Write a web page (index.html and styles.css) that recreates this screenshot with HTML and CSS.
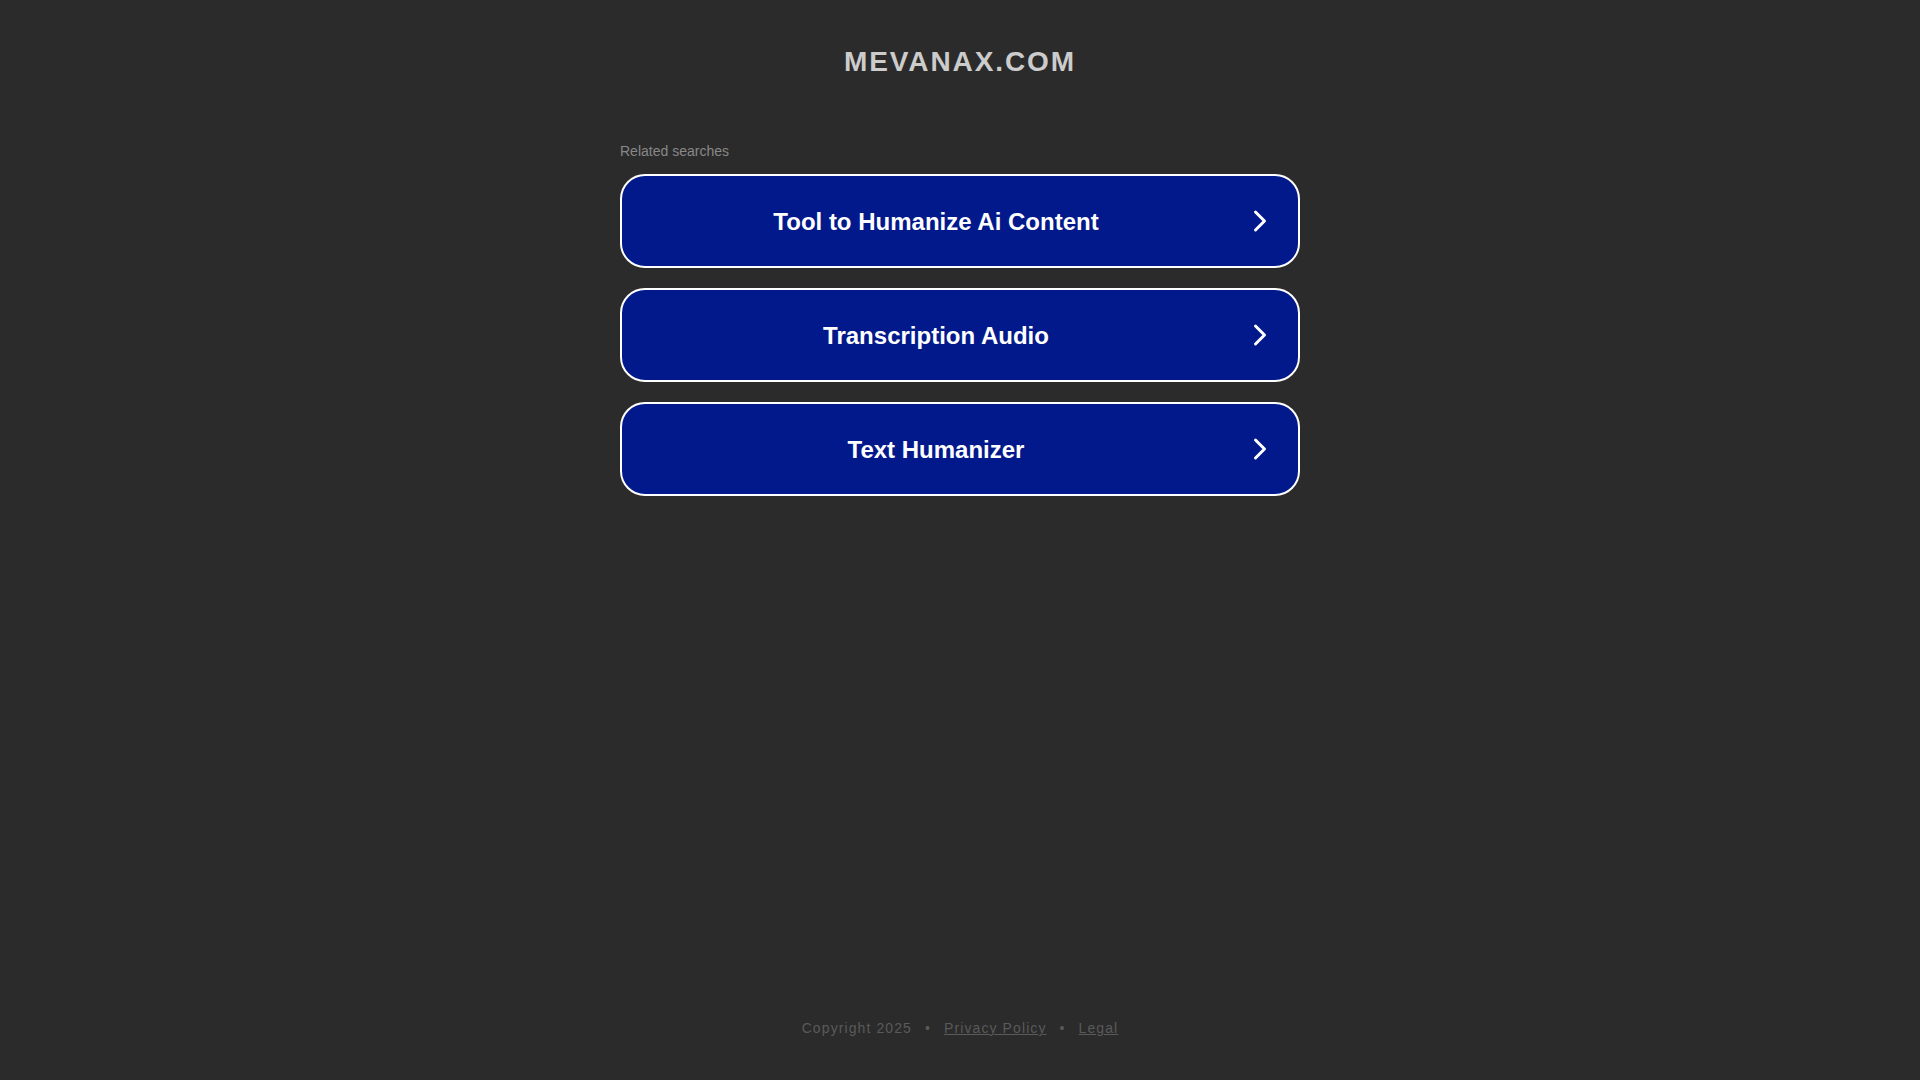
FILE: index.html
```html
<!DOCTYPE html>
<html lang="en">
<head>
<meta charset="utf-8">
<title>mevanax.com</title>
<link rel="stylesheet" href="styles.css">
</head>
<body>
<div class="page">
  <header class="header">
    <h1 class="domain">MEVANAX.COM</h1>
  </header>
  <main class="content">
    <div class="related-label">Related searches</div>
    <ul class="links">
      <li><a class="search-btn" href="#"><span class="search-text">Tool to Humanize Ai Content</span><svg class="chev" width="16" height="24" viewBox="0 0 16 24"><polyline points="3.5,3 12.5,12 3.5,21" fill="none" stroke="#fff" stroke-width="3" stroke-linecap="round" stroke-linejoin="round"/></svg></a></li>
      <li><a class="search-btn" href="#"><span class="search-text">Transcription Audio</span><svg class="chev" width="16" height="24" viewBox="0 0 16 24"><polyline points="3.5,3 12.5,12 3.5,21" fill="none" stroke="#fff" stroke-width="3" stroke-linecap="round" stroke-linejoin="round"/></svg></a></li>
      <li><a class="search-btn" href="#"><span class="search-text">Text Humanizer</span><svg class="chev" width="16" height="24" viewBox="0 0 16 24"><polyline points="3.5,3 12.5,12 3.5,21" fill="none" stroke="#fff" stroke-width="3" stroke-linecap="round" stroke-linejoin="round"/></svg></a></li>
    </ul>
  </main>
  <footer class="footer">
    <span class="copy">Copyright 2025</span><span class="sep">•</span><a class="foot-link" href="#">Privacy Policy</a><span class="sep">•</span><a class="foot-link" href="#">Legal</a>
  </footer>
</div>
</body>
</html>
```

FILE: styles.css
```css
html, body {
  margin: 0;
  padding: 0;
  background: #2b2b2b;
}

body {
  font-family: "Liberation Sans", Arial, sans-serif;
}

.page {
  min-height: 100vh;
  display: flex;
  flex-direction: column;
  align-items: center;
  box-sizing: border-box;
}

.header {
  padding-top: 46px;
}

.domain {
  margin: 0;
  font-size: 28px;
  line-height: 32px;
  font-weight: bold;
  letter-spacing: 1.9px;
  color: #cccccc;
  text-align: center;
}

.content {
  width: 680px;
  margin-top: 65px;
}

.related-label {
  font-size: 14px;
  line-height: 16px;
  color: #888888;
}

.links {
  list-style: none;
  margin: 15px 0 0 0;
  padding: 0;
  display: flex;
  flex-direction: column;
  gap: 20px;
}

.search-btn {
  display: flex;
  align-items: center;
  box-sizing: border-box;
  height: 94px;
  border: 2px solid #ffffff;
  border-radius: 25px;
  background: #02198b;
  text-decoration: none;
  color: #ffffff;
}

.search-text {
  flex: 1;
  text-align: center;
  font-size: 24px;
  font-weight: bold;
  line-height: 28px;
  padding-top: 1px;
}

.chev {
  flex: none;
  display: block;
  margin-left: 2px;
  margin-right: 30px;
}

.footer {
  margin-top: auto;
  padding-bottom: 44px;
  font-size: 14px;
  line-height: 16px;
  letter-spacing: 1.1px;
  color: #5a5a5a;
  display: flex;
  align-items: baseline;
}

.sep {
  margin: 0 13px;
}

.foot-link {
  color: #5a5a5a;
  text-decoration: underline;
}
```
